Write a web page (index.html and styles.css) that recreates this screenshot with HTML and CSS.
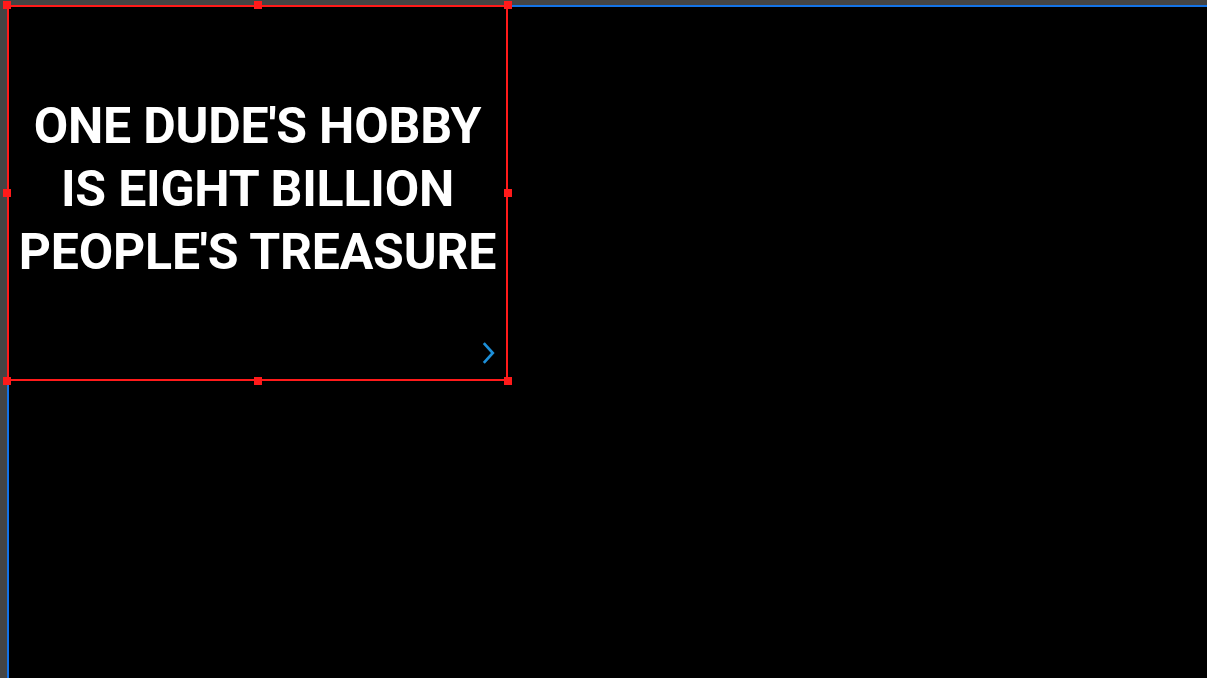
FILE: index.html
```html
<!DOCTYPE html>
<html>
<head>
<meta charset="utf-8">
<link rel="stylesheet" href="styles.css">
</head>
<body>
<div class="canvas">
  <div class="frame">
    <h1 class="headline">ONE DUDE'S HOBBY<br>IS EIGHT BILLION<br>PEOPLE'S TREASURE</h1>
    <svg class="chevron" width="15" height="26" viewBox="0 0 15 26"><path d="M2.8 3.2 L11.8 13 L2.8 22.8" fill="none" stroke="#1d8fd8" stroke-width="2.7"/></svg>
    <div class="selection">
      <span class="handle h-tl"></span>
      <span class="handle h-tm"></span>
      <span class="handle h-tr"></span>
      <span class="handle h-ml"></span>
      <span class="handle h-mr"></span>
      <span class="handle h-bl"></span>
      <span class="handle h-bm"></span>
      <span class="handle h-br"></span>
    </div>
  </div>
</div>
</body>
</html>
```
FILE: styles.css
```css
html, body {
  margin: 0;
  height: 100%;
}
body {
  background: #444444;
  padding: 5px 0 0 7px;
  box-sizing: border-box;
  overflow: hidden;
}
.canvas {
  height: 100%;
  background: #000;
  border-top: 2px solid #1473e6;
  border-left: 2px solid #1473e6;
  box-sizing: border-box;
}
.frame {
  position: relative;
  width: 501px;
  height: 376px;
  margin: -2px 0 0 -2px;
  display: flex;
  align-items: center;
  justify-content: center;
  box-sizing: border-box;
}
.headline {
  margin: 0 0 7px 0;
  font-family: "Roboto", sans-serif;
  font-weight: 700;
  font-size: 50px;
  line-height: 63px;
  letter-spacing: -0.2px;
  color: #fff;
  text-align: center;
}
.chevron {
  position: absolute;
  left: 474px;
  top: 335px;
}
.selection {
  position: absolute;
  inset: 0;
  border: 2px solid #ff1a1a;
}
.handle {
  position: absolute;
  width: 8px;
  height: 8px;
  background: #ff1a1a;
}
.h-tl { left: -6px; top: -6px; }
.h-tm { left: 245px; top: -6px; }
.h-tr { right: -6px; top: -6px; }
.h-ml { left: -6px; top: 182px; }
.h-mr { right: -6px; top: 182px; }
.h-bl { left: -6px; bottom: -6px; }
.h-bm { left: 245px; bottom: -6px; }
.h-br { right: -6px; bottom: -6px; }
```
